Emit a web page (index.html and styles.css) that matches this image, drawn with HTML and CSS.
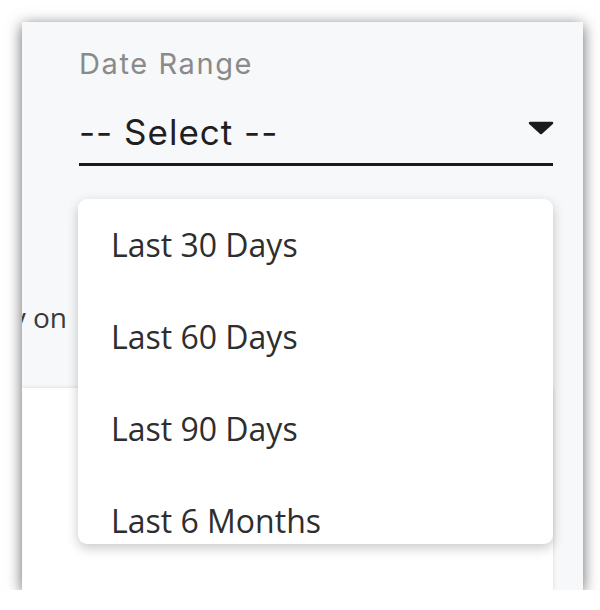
FILE: index.html
```html
<!DOCTYPE html>
<html lang="en">
<head>
<meta charset="utf-8">
<title>Date Range</title>
<link rel="stylesheet" href="styles.css">
</head>
<body>
<div class="panel">
  <section class="filters">
    <div class="field">
      <div class="field-label">Date Range</div>
      <div class="select">
        <span class="select-value">-- Select --</span>
        <svg class="caret" width="26" height="14" viewBox="0 0 26 14" aria-hidden="true">
          <path d="M2 2 L24 2 L13 12 Z" fill="#1a1a1a" stroke="#1a1a1a" stroke-width="2.5" stroke-linejoin="round"/>
        </svg>
      </div>
    </div>
    <div class="hint"><span>Show activity on</span></div>
  </section>
  <section class="card"></section>
  <ul class="menu">
    <li class="menu-item">Last 30 Days</li>
    <li class="menu-item">Last 60 Days</li>
    <li class="menu-item">Last 90 Days</li>
    <li class="menu-item">Last 6 Months</li>
  </ul>
</div>
</body>
</html>
```
FILE: styles.css
```css
html, body {
  margin: 0;
  padding: 0;
  background: #ffffff;
}

body {
  padding: 22px 0 0 22px;
  font-family: Inter, "Liberation Sans", sans-serif;
}

.panel {
  position: relative;
  width: 561px;
  height: 568px;
  overflow: hidden;
  background: #f7f8fa;
  box-shadow: 0 3px 14px rgba(0, 0, 0, 0.6);
  display: flex;
  flex-direction: column;
}

.filters {
  height: 366px;
  flex-shrink: 0;
  box-sizing: border-box;
  padding-top: 26px;
}

.field {
  margin-left: 57px;
  width: 474px;
}

.field-label {
  font-family: Inter, sans-serif;
  font-size: 29px;
  line-height: 32px;
  letter-spacing: 1.6px;
  color: #8a8a8a;
}

.select {
  margin-top: 32px;
  display: flex;
  justify-content: space-between;
  align-items: flex-start;
  padding-bottom: 11px;
  border-bottom: 3px solid #1a1a1a;
}

.select-value {
  font-family: Inter, sans-serif;
  font-size: 35px;
  line-height: 40px;
  letter-spacing: 1px;
  color: #1f1f1f;
}

.caret {
  margin-top: 9px;
  margin-right: -1px;
  display: block;
}

.hint {
  margin-top: 132px;
  width: 45px;
  display: flex;
  justify-content: flex-end;
  font-family: "Open Sans", sans-serif;
  font-size: 28px;
  line-height: 38px;
  color: #3a3a3a;
  white-space: nowrap;
}

.hint span {
  flex-shrink: 0;
}

.card {
  flex: 1;
  width: 531px;
  background: #ffffff;
  box-shadow: 0 0 4px rgba(0, 0, 0, 0.14);
}

.menu {
  position: absolute;
  left: 56px;
  top: 177px;
  width: 475px;
  height: 345px;
  margin: 0;
  padding: 0;
  box-sizing: border-box;
  list-style: none;
  background: #ffffff;
  border-radius: 9px;
  box-shadow: 0 4px 12px rgba(0, 0, 0, 0.22);
  overflow: hidden;
}

.menu-item {
  height: 92px;
  line-height: 92px;
  padding-left: 33px;
  font-family: "Open Sans", sans-serif;
  font-size: 32px;
  color: #2e2e2e;
  white-space: nowrap;
}
```
